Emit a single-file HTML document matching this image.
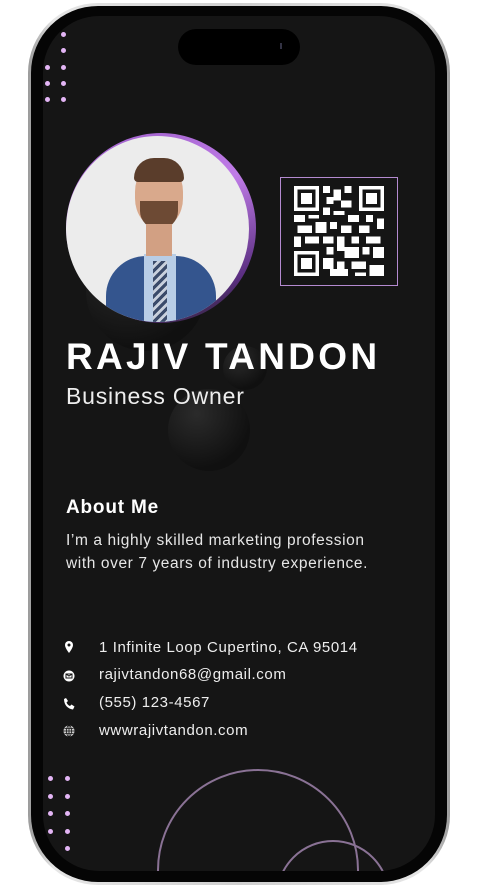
<!DOCTYPE html>
<html><head><meta charset="utf-8"><style>
*{margin:0;padding:0;box-sizing:border-box}
html,body{width:478px;height:889px;overflow:hidden}
body{background:#fff;position:relative;font-family:"Liberation Sans",sans-serif}
.frame{position:absolute;left:28px;top:3px;width:422px;height:882px;border-radius:70px;background:linear-gradient(90deg,#9a9a9a,#e6e6e6 6%,#cfcfcf 50%,#e6e6e6 94%,#9a9a9a);}
.bezel{position:absolute;left:31px;top:6px;width:416px;height:876px;border-radius:67px;background:#050505}
.screen{position:absolute;left:43px;top:16px;width:392px;height:855px;border-radius:56px;background:#151515;overflow:hidden;color:#fff}
.island{position:absolute;left:135px;top:13px;width:122px;height:36px;border-radius:18px;background:#000}
.dot{position:absolute;width:5px;height:5px;border-radius:50%;background:#e3b5f5}
.ball{position:absolute;border-radius:50%;background:radial-gradient(circle at 35% 30%,#2b2b2b,#101010 70%)}
.t{position:absolute;white-space:nowrap}
.ic{position:absolute;left:20px;width:12px;height:12px}
.c{font-size:15px;color:#eee;letter-spacing:0.6px}
</style></head><body>
<div class="frame"></div><div class="bezel"></div>
<div class="screen">
<div class="island"><div style="position:absolute;left:102px;top:14px;width:2px;height:6px;background:#334"></div></div>
<div class="dot" style="left:18px;top:16px"></div><div class="dot" style="left:18px;top:32px"></div>
<div class="dot" style="left:2px;top:49px"></div><div class="dot" style="left:18px;top:49px"></div>
<div class="dot" style="left:2px;top:65px"></div><div class="dot" style="left:18px;top:65px"></div>
<div class="dot" style="left:2px;top:81px"></div><div class="dot" style="left:18px;top:81px"></div>
<div class="ball" style="left:43px;top:215px;width:120px;height:120px"></div>
<div class="ball" style="left:180px;top:330px;width:44px;height:44px"></div>
<div class="ball" style="left:125px;top:373px;width:82px;height:82px"></div>
<div style="position:absolute;left:23px;top:117px;width:190px;height:190px;border-radius:50%;background:linear-gradient(160deg,#9d5fc9,#c07ce8 40%,#5a2e80 80%,#222)"></div>
<div style="position:absolute;left:23px;top:120px;width:183px;height:186px;border-radius:50%;background:#ececec;overflow:hidden">
 <div style="position:absolute;left:40px;top:120px;width:110px;height:80px;border-radius:40px 40px 0 0;background:#34558e"></div>
 <div style="position:absolute;left:78px;top:118px;width:32px;height:80px;background:#b8cde6"></div>
 <div style="position:absolute;left:87px;top:125px;width:14px;height:75px;background:repeating-linear-gradient(135deg,#3a4b6a 0 3px,#c8d0dc 3px 6px)"></div>
 <div style="position:absolute;left:69px;top:27px;width:48px;height:64px;border-radius:45%;background:#d9a98c"></div>
 <div style="position:absolute;left:68px;top:22px;width:50px;height:24px;border-radius:25px 25px 5px 5px;background:#5a3d2b"></div>
 <div style="position:absolute;left:74px;top:65px;width:38px;height:28px;border-radius:0 0 18px 18px;background:#6d4a34"></div>
 <div style="position:absolute;left:80px;top:88px;width:26px;height:32px;background:#d2a083"></div>
</div>
<div style="position:absolute;left:237px;top:161px;width:118px;height:109px;border:1.5px solid #b48ad0"></div>
<svg style="position:absolute;left:251px;top:170px" width="90" height="90" viewBox="0 0 25 25" shape-rendering="crispEdges" fill="#fff">
<path d="M0 0h7v7H0zM18 0h7v7h-7zM0 18h7v7H0z"/>
<path fill="#151515" d="M1 1h5v5H1zM19 1h5v5h-5zM1 19h5v5H1z"/>
<path d="M2 2h3v3H2zM20 2h3v3h-3zM2 20h3v3H2z"/>
<path d="M8 0h2v2H8zM11 1h2v3h-2zM14 0h2v2h-2zM9 3h2v2H9zM13 4h3v2h-3zM8 6h2v2H8zM11 7h3v1h-3zM0 8h3v2H0zM4 8h3v1H4zM15 8h3v2h-3zM20 8h2v2h-2zM23 9h2v3h-2zM1 11h4v2H1zM6 10h3v3H6zM10 10h2v2h-2zM13 11h3v2h-3zM18 11h3v2h-3zM0 14h2v3H0zM3 14h4v2H3zM8 14h3v2H8zM12 14h2v4h-2zM16 14h2v2h-2zM20 14h4v2h-4zM9 17h2v2H9zM14 17h4v3h-4zM19 17h2v2h-2zM22 17h3v3h-3zM8 20h3v3H8zM12 21h2v2h-2zM16 21h4v2h-4zM21 22h4v3h-4zM10 23h5v2h-5zM17 24h3v1h-3z"/>
</svg>
<div class="t" style="left:23px;top:320px;font-size:37px;font-weight:bold;letter-spacing:3.3px">RAJIV TANDON</div>
<div class="t" style="left:23px;top:367px;font-size:23px;color:#eee;letter-spacing:0.8px">Business Owner</div>
<div class="t" style="left:23px;top:481px;font-size:19px;font-weight:bold;letter-spacing:0.8px">About Me</div>
<div class="t" style="left:23px;top:513px;font-size:15.5px;line-height:23px;color:#e6e6e6;letter-spacing:0.6px">I’m a highly skilled marketing profession<br>with over 7 years of industry experience.</div>
<svg class="ic" style="top:625px" viewBox="0 0 12 12"><path d="M6 0a4 4 0 0 0-4 4c0 3 4 8 4 8s4-5 4-8a4 4 0 0 0-4-4z" fill="#fff"/><circle cx="6" cy="4" r="1.5" fill="#151515"/></svg>
<svg class="ic" style="top:654px" viewBox="0 0 12 12"><circle cx="6" cy="6" r="5.5" fill="#fff"/><rect x="3" y="4" width="6" height="4" fill="none" stroke="#151515"/><path d="M3 4l3 2 3-2" stroke="#151515" fill="none"/></svg>
<svg class="ic" style="top:682px" viewBox="0 0 12 12"><path d="M3 0l2 3-1.5 1.5c.8 1.8 2 3 3.5 3.5L8.5 6.5l3 2-1.5 3C5 11 1 7 1 1z" fill="#fff"/></svg>
<svg class="ic" style="top:709px" viewBox="0 0 12 12"><circle cx="6" cy="6" r="5.5" fill="#ccc"/><path d="M0.5 6h11M6 .5v11M1.5 3.5h9M1.5 8.5h9" stroke="#151515" stroke-width=".8"/><ellipse cx="6" cy="6" rx="2.5" ry="5.5" fill="none" stroke="#151515" stroke-width=".8"/></svg>
<div class="t c" style="left:56px;top:623px">1 Infinite Loop Cupertino, CA 95014</div>
<div class="t c" style="left:56px;top:650px">rajivtandon68@gmail.com</div>
<div class="t c" style="left:56px;top:678px">(555) 123-4567</div>
<div class="t c" style="left:56px;top:706px">wwwrajivtandon.com</div>
<div class="dot" style="left:5px;top:760px"></div><div class="dot" style="left:22px;top:760px"></div>
<div class="dot" style="left:5px;top:778px"></div><div class="dot" style="left:22px;top:778px"></div>
<div class="dot" style="left:5px;top:795px"></div><div class="dot" style="left:22px;top:795px"></div>
<div class="dot" style="left:5px;top:813px"></div><div class="dot" style="left:22px;top:813px"></div>
<div class="dot" style="left:22px;top:830px"></div>
<div style="position:absolute;left:114px;top:753px;width:202px;height:202px;border-radius:50%;border:2px solid #8a7295"></div>
<div style="position:absolute;left:233px;top:824px;width:114px;height:114px;border-radius:50%;border:2px solid #8a7295"></div>
</div>
</body></html>
